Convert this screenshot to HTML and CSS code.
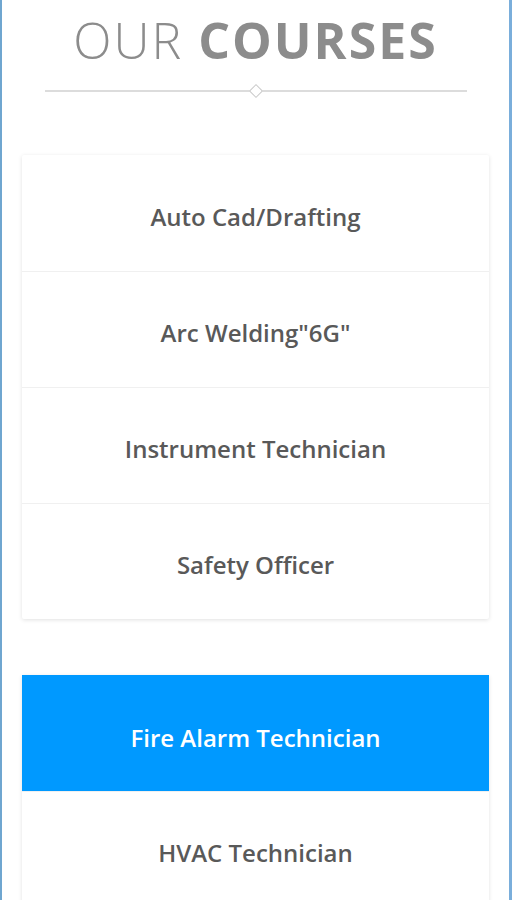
FILE: index.html
```html
<!DOCTYPE html>
<html>
<head>
<meta charset="utf-8">
<link rel="stylesheet" href="styles.css">
</head>
<body>
<div class="frame">
  <h1 class="title"><span class="light">OUR</span> <span class="bold">COURSES</span></h1>
  <div class="divider"><span class="diamond"></span></div>
  <div class="card">
    <div class="row">Auto Cad/Drafting</div>
    <div class="row">Arc Welding"6G"</div>
    <div class="row">Instrument Technician</div>
    <div class="row">Safety Officer</div>
  </div>
  <div class="card card2">
    <div class="row active">Fire Alarm Technician</div>
    <div class="row">HVAC Technician</div>
  </div>
</div>
</body>
</html>
```
FILE: styles.css
```css
html, body {
  margin: 0;
  padding: 0;
  background: #fff;
  height: 100%;
  overflow: hidden;
}
.frame {
  box-sizing: border-box;
  height: 900px;
  border-left: 2px solid #6fa6d0;
  border-right: 3px solid #7aaedb;
  padding: 12px 20px 0 20px;
  font-family: "Open Sans", sans-serif;
}
.title {
  margin: 0;
  text-align: center;
  font-size: 50px;
  line-height: 56px;
  color: #8c8c8c;
  letter-spacing: 2px;
  font-weight: 300;
}
.title .bold {
  font-weight: 700;
}
.divider {
  position: relative;
  margin: 22px 22px 0 23px;
  height: 2px;
  background: #dcdcdc;
}
.diamond {
  position: absolute;
  left: 50%;
  top: 50%;
  width: 8px;
  height: 8px;
  margin: -5px 0 0 -5px;
  background: #fff;
  border: 1px solid #c8c8c8;
  transform: rotate(45deg);
}
.card {
  margin-top: 63px;
  background: #fff;
  box-shadow: 0 1px 4px rgba(0,0,0,0.12);
  border-radius: 2px;
}
.card2 {
  margin-top: 56px;
}
.row {
  height: 116px;
  display: flex;
  align-items: center;
  justify-content: center;
  padding-top: 6px;
  font-size: 24px;
  font-weight: 600;
  color: #595959;
  border-top: 1px solid #f0f0f0;
  box-sizing: border-box;
}
.row:first-child {
  border-top: none;
}
.row.active {
  background: #0099ff;
  color: #fff;
  height: 116px;
  padding-top: 8px;
}
```
